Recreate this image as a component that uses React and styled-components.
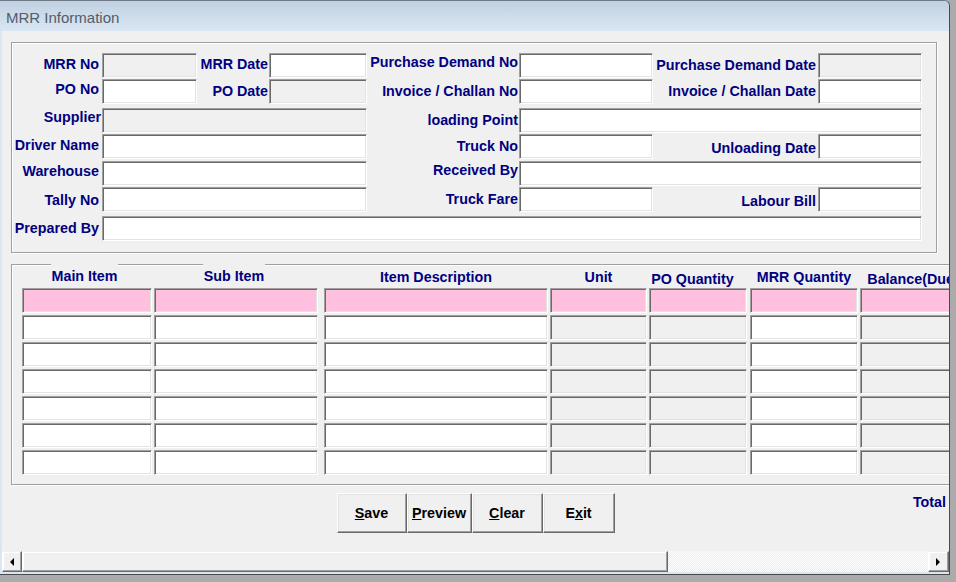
import React from "react";
import styled, { createGlobalStyle } from "styled-components";

const Global = createGlobalStyle`
  html, body { margin: 0; padding: 0; }
  body {
    background: #ababab;
    font-family: "Liberation Sans", Arial, sans-serif;
    overflow: hidden;
  }
`;

const Window = styled.div`
  width: 950px;
  height: 575px;
  box-sizing: border-box;
  border-top: 1px solid #6e7a86;
  border-right: 1px solid #4a4a4a;
  border-bottom: 1px solid #4a4a4a;
  border-top-right-radius: 6px;
  background: #dbe6f3;
  display: flex;
  flex-direction: column;
  overflow: hidden;
`;

const TitleBar = styled.div`
  height: 30px;
  flex: none;
  display: flex;
  align-items: center;
  padding: 2px 0 0 6px;
  box-sizing: border-box;
  background: linear-gradient(#c1d1e2, #dae6f3);
  color: #525d6a;
  font-size: 15px;
`;

const Body = styled.div`
  flex: 1;
  min-height: 0;
  margin: 0 0 2px 2px;
  background: #f0f0f0;
  display: flex;
  flex-direction: column;
  overflow: hidden;
`;

const GroupBox = styled.div`
  border: 1px solid #a0a0a0;
  box-shadow: inset 1px 1px 0 #fff, 1px 1px 0 #fff;
  box-sizing: border-box;
  flex: none;
`;

const TopGroup = styled(GroupBox)`
  margin: 11px 0 0 9px;
  width: 926px;
  padding: 10px 0 11px 0;
  display: grid;
  grid-template-columns: 90px 95px 72px 98px 152px 134px 165px 104px;
  grid-template-rows: 26px 29px 26px 27px 26px 29px 25px;
`;

const Label = styled.div`
  grid-row: ${(p) => p.$row};
  grid-column: ${(p) => p.$col};
  align-self: start;
  height: 25px;
  margin-top: ${(p) => p.$dy || 0}px;
  display: flex;
  align-items: center;
  justify-content: flex-end;
  padding-right: ${(p) => (p.$pr === undefined ? 2 : p.$pr)}px;
  white-space: nowrap;
  font-weight: bold;
  font-size: 14.3px;
  color: #000080;
`;

const Sunken = styled.div`
  box-sizing: border-box;
  height: 25px;
  border: 1px solid;
  border-color: #a0a0a0 #fff #fff #a0a0a0;
  box-shadow: inset 1px 1px 0 #696969, inset -1px -1px 0 #e3e3e3;
  background: ${(p) => (p.$ro ? "#f0f0f0" : "#fff")};
`;

const Field = styled(Sunken)`
  grid-row: ${(p) => p.$row};
  grid-column: ${(p) => p.$col};
  align-self: start;
`;

const TableGroup = styled(GroupBox)`
  margin: 11px 0 0 9px;
  align-self: flex-start;
  padding: 0 10px 9px 10px;
  display: grid;
  grid-template-columns: ${(p) => p.$tpl};
  grid-template-rows: 21px repeat(7, 25px);
  row-gap: 2px;
`;

const HeaderCell = styled.div`
  margin-left: ${(p) => p.$lead}px;
  display: flex;
  justify-content: center;
  align-items: flex-start;
  white-space: nowrap;
`;

const HeadText = styled.span`
  margin-top: ${(p) => p.$top}px;
  margin-right: ${(p) => (p.$shift < 0 ? -2 * p.$shift : 0)}px;
  line-height: 16px;
  padding: 0 1px;
  font-weight: bold;
  font-size: 14.3px;
  color: #000080;
  background: ${(p) => (p.$cover ? "#f0f0f0" : "transparent")};
  box-shadow: ${(p) => (p.$cover ? "0 -4px 0 #f0f0f0" : "none")};
`;

const Cell = styled(Sunken)`
  margin-left: ${(p) => p.$lead}px;
  background: ${(p) => p.$bg};
`;

const Footer = styled.div`
  flex: none;
  margin-top: 8px;
  display: grid;
  grid-template-columns: 1fr auto 1fr;
  padding: 0 3px 0 3px;
`;

const ButtonRow = styled.div`
  grid-column: 2;
  display: flex;
`;

const Button = styled.button`
  width: ${(p) => p.$w}px;
  height: 40px;
  padding: 0;
  box-sizing: border-box;
  background: #f0f0f0;
  border: 1px solid;
  border-color: #fff #696969 #696969 #fff;
  box-shadow: inset -1px -1px 0 #a0a0a0, inset 1px 1px 0 #e3e3e3;
  font-family: "Liberation Sans", Arial, sans-serif;
  font-weight: bold;
  font-size: 14.3px;
  color: #000;
  white-space: nowrap;
`;

const Total = styled.div`
  grid-column: 3;
  justify-self: end;
  align-self: start;
  margin-top: 1px;
  line-height: 16px;
  font-weight: bold;
  font-size: 14.3px;
  color: #000080;
`;

const ScrollBar = styled.div`
  margin-top: auto;
  flex: none;
  height: 21px;
  display: flex;
  background: #f0f0f0;
`;

const Raised = styled.div`
  box-sizing: border-box;
  height: 21px;
  border: 1px solid;
  border-color: #f0f0f0 #696969 #696969 #fff;
  box-shadow: inset -1px -1px 0 #a0a0a0, inset 1px 1px 0 #fff;
  background: #f0f0f0;
  display: flex;
  align-items: center;
  justify-content: center;
`;

const ArrowBtn = styled(Raised)`
  width: ${(p) => p.$w}px;
  flex: none;
`;

const Thumb = styled(Raised)`
  width: 646px;
  flex: none;
`;

const Track = styled.div`
  flex: 1;
  background: repeating-conic-gradient(#ffffff 0 25%, #ececec 0 50%) 0 0 / 2px 2px;
`;

const Arrow = ({ dir }) => (
  <svg width="5" height="8" viewBox="0 0 5 8">
    {dir === "left" ? <polygon points="4,0 0,4 4,8" fill="#000" /> : <polygon points="0,0 4,4 0,8" fill="#000" />}
  </svg>
);

const columns = [
  { title: "Main Item", lead: 0, w: 130, bg: "#fff", top: 2.5, cover: true, shift: -2.5 },
  { title: "Sub Item", lead: 2, w: 164, bg: "#fff", top: 2.5, cover: true, shift: -2 },
  { title: "Item Description", lead: 6, w: 224, bg: "#fff", top: 4 },
  { title: "Unit", lead: 2, w: 97, bg: "#f0f0f0", top: 4 },
  { title: "PO Quantity", lead: 2, w: 98, bg: "#f0f0f0", top: 6, shift: -5.5 },
  { title: "MRR Quantity", lead: 3, w: 108, bg: "#fff", top: 4 },
  { title: "Balance(Due)", lead: 2, w: 106, bg: "#f0f0f0", top: 6 },
];

const rows = [0, 1, 2, 3, 4, 5, 6];

export default function App() {
  const tpl = columns.map((c) => `${c.lead + c.w}px`).join(" ");
  return (
    <>
      <Global />
      <Window>
        <TitleBar>MRR Information</TitleBar>
        <Body>
          <TopGroup>
            <Label $row={1} $col="1" $dy={-1.5} $pr={3}>MRR No</Label>
            <Field $row={1} $col="2" $ro />
            <Label $row={1} $col="3" $dy={-1.3} $pr={1}>MRR Date</Label>
            <Field $row={1} $col="4" />
            <Label $row={1} $col="5" $dy={-4} $pr={1}>Purchase Demand No</Label>
            <Field $row={1} $col="6" />
            <Label $row={1} $col="7" $dy={-1}>Purchase Demand Date</Label>
            <Field $row={1} $col="8" $ro />

            <Label $row={2} $col="1" $dy={-3} $pr={3}>PO No</Label>
            <Field $row={2} $col="2" />
            <Label $row={2} $col="3" $dy={-1} $pr={1}>PO Date</Label>
            <Field $row={2} $col="4" $ro />
            <Label $row={2} $col="5" $dy={-1} $pr={1}>Invoice / Challan No</Label>
            <Field $row={2} $col="6" />
            <Label $row={2} $col="7" $dy={-0.7}>Invoice / Challan Date</Label>
            <Field $row={2} $col="8" />

            <Label $row={3} $col="1" $dy={-4} $pr={1}>Supplier</Label>
            <Field $row={3} $col="2 / 5" $ro />
            <Label $row={3} $col="5" $dy={-1} $pr={1}>loading Point</Label>
            <Field $row={3} $col="6 / 9" />

            <Label $row={4} $col="1" $dy={-1.5} $pr={3}>Driver Name</Label>
            <Field $row={4} $col="2 / 5" />
            <Label $row={4} $col="5" $dy={-1} $pr={1}>Truck No</Label>
            <Field $row={4} $col="6" />
            <Label $row={4} $col="7" $dy={1}>Unloading Date</Label>
            <Field $row={4} $col="8" />

            <Label $row={5} $col="1" $dy={-2.7} $pr={3}>Warehouse</Label>
            <Field $row={5} $col="2 / 5" />
            <Label $row={5} $col="5" $dy={-3.5} $pr={1}>Received By</Label>
            <Field $row={5} $col="6 / 9" />

            <Label $row={6} $col="1" $pr={3}>Tally No</Label>
            <Field $row={6} $col="2 / 5" />
            <Label $row={6} $col="5" $dy={-1} $pr={1}>Truck Fare</Label>
            <Field $row={6} $col="6" />
            <Label $row={6} $col="7" $dy={1.3}>Labour Bill</Label>
            <Field $row={6} $col="8" />

            <Label $row={7} $col="1" $dy={-0.7} $pr={3}>Prepared By</Label>
            <Field $row={7} $col="2 / 9" />
          </TopGroup>

          <TableGroup $tpl={tpl}>
            {columns.map((c) => (
              <HeaderCell key={c.title} $lead={c.lead}>
                <HeadText $top={c.top} $cover={c.cover} $shift={c.shift || 0}>
                  {c.title}
                </HeadText>
              </HeaderCell>
            ))}
            {columns.map((c) => (
              <Cell key={"p" + c.title} $lead={c.lead} $bg="#ffc0e0" />
            ))}
            {rows.slice(1).map((r) =>
              columns.map((c) => <Cell key={r + c.title} $lead={c.lead} $bg={c.bg} />)
            )}
          </TableGroup>

          <Footer>
            <ButtonRow>
              <Button $w={70}><u>S</u>ave</Button>
              <Button $w={65}><u>P</u>review</Button>
              <Button $w={71}><u>C</u>lear</Button>
              <Button $w={72}>E<u>x</u>it</Button>
            </ButtonRow>
            <Total>Total</Total>
          </Footer>

          <ScrollBar>
            <ArrowBtn $w={20}><Arrow dir="left" /></ArrowBtn>
            <Thumb />
            <Track />
            <ArrowBtn $w={21}><Arrow dir="right" /></ArrowBtn>
          </ScrollBar>
        </Body>
      </Window>
    </>
  );
}
